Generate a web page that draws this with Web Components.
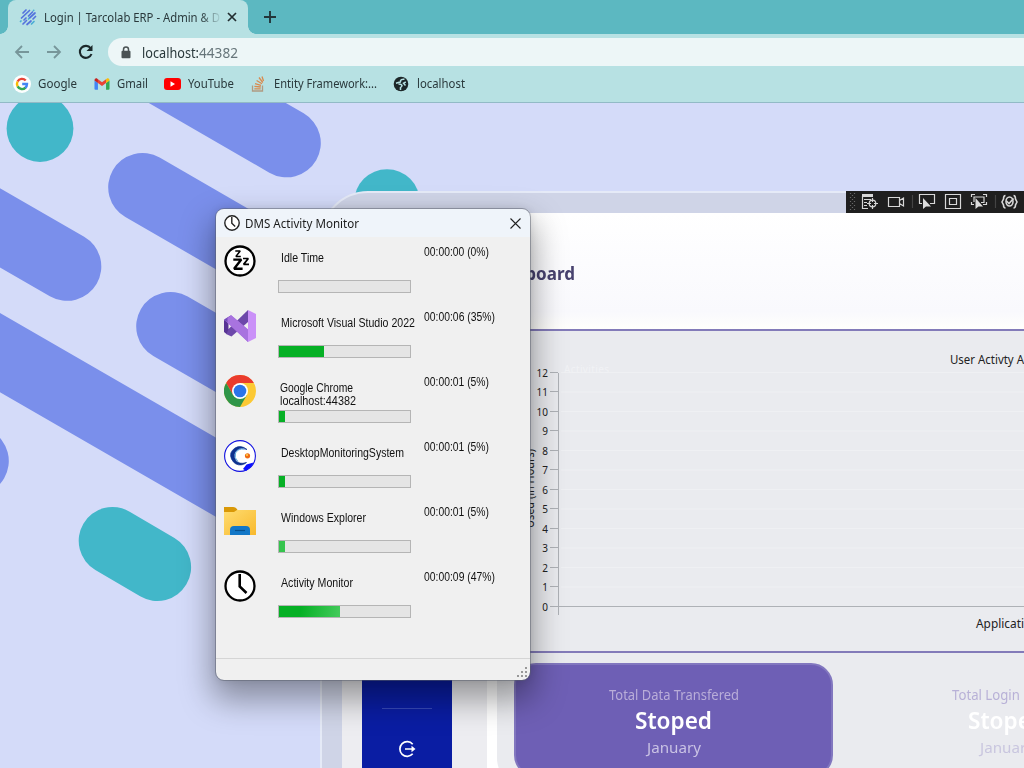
<!DOCTYPE html>
<html lang="en">
<head>
<meta charset="utf-8">
<title>Tarcolab ERP</title>
<style>
body{margin:0;width:1024px;height:768px;overflow:hidden;position:relative;font-family:"Noto Sans","Open Sans",sans-serif}
</style>
</head>
<body>
<browser-chrome></browser-chrome>
<page-view></page-view>
<activity-window></activity-window>
<script>
const define=(name,html,after)=>customElements.define(name,class extends HTMLElement{
  connectedCallback(){
    if(this.shadowRoot)return;
    const root=this.attachShadow({mode:'open'});
    const t=document.createElement('template');
    t.innerHTML=typeof html==='function'?html(this):html;
    root.append(t.content.cloneNode(true));
    if(after)after(this,root);
  }
});

// One line of text, condensed or widened horizontally to the width given in w.
define('fit-text',e=>`<style>:host{display:block;width:${e.getAttribute('w')}px;white-space:nowrap;flex:none}span{display:inline-block;transform-origin:0 50%}</style><span>${e.textContent}</span>`,
(e,r)=>{const s=r.querySelector('span');const n=s.offsetWidth&&s.getBoundingClientRect().width;if(n)s.style.transform=`scaleX(${(+e.getAttribute('w')/n).toFixed(4)})`});

const icons={
tarco:`<svg width="18" height="18" viewBox="0 0 18 18" fill="none" stroke-width="1.700" stroke-linecap="round"><path stroke="#5573dd" d="M4 5L7 2M2.500 10L10.500 2.500M5 12L7 10M9.500 8L13.500 4M4 16L7.500 12.500M10.500 10L16 5M8 16.500L12 13M14 11L16.500 8.500"/><path stroke="#4aaed5" d="M12.500 16L15 13.500M9.500 11L10 10.500M14.500 2.500L14.700 2.300M1.500 13.500L2 13"/></svg>`,
google:`<svg width="18" height="18" viewBox="0 0 18 18"><circle cx="9" cy="9" r="9" fill="#fcfefe"/><g fill="none" stroke-width="2.400"><path stroke="#e94335" d="M4.600 6.500A5 5 0 0 1 12.700 5.500"/><path stroke="#fabb05" d="M4.600 11.400A5 5 0 0 1 4.600 6.500"/><path stroke="#34a853" d="M12.600 12.600A5 5 0 0 1 4.600 11.400"/><path stroke="#4285f4" d="M9.200 9H14A5 5 0 0 1 12.300 12.800"/></g></svg>`,
gmail:`<svg width="16" height="12" viewBox="-.5 0 17 12"><path fill="#4285f4" d="M1 12h2.700V5L0 2.300V11q0 1 1 1z"/><path fill="#34a853" d="M12.300 12H15q1 0 1-1V2.300L12.300 5z"/><path fill="#fbbc04" d="M12.300 1v4L16 2.300V1.800Q15.500-.6 13.600 0z"/><path fill="#ea4335" d="M3.700 5V1L8 4.200 12.300 1v4L8 8.200z"/><path fill="#c5221f" d="M0 1.800v.5L3.700 5V1L2.400 0Q.3-.4 0 1.800z"/></svg>`,
youtube:`<svg width="17" height="12" viewBox="0 0 17 12"><rect width="17" height="12" rx="3" fill="#f00"/><path d="M6.500 3.300v5.400L11 6z" fill="#fff"/></svg>`,
stack:`<svg width="14" height="16" viewBox="0 0 14 16" fill="none" stroke="#d98a4e" stroke-width="1.300"><path d="M1.500 9.500V15H11.500V9.500" stroke="#b09a82"/><path d="M3.300 12.800H9.700M3.400 10.300L9.800 11M4 7.600L10 9.300M5.600 4.500L11 7.800M8 1.500L11.800 6.500M11 .5L12.500 5"/></svg>`,
globe:`<svg width="16" height="16" viewBox="0 0 16 16"><circle cx="8" cy="8" r="7.300" fill="#1c2628"/><path fill="none" stroke="#b7e1e3" stroke-width="1.500" d="M11.500 3.300Q8 3 7.500 4.800Q8 6.500 6 6.300L3 7.200M5.500 8Q8.500 8 9 9.500Q9 10.500 7.500 11.500V14M12.800 6L10.500 7.200 12.500 9.500"/></svg>`,
zzz:`<svg width="32" height="32" viewBox="0 0 32 32" fill="none" stroke="#000" stroke-linejoin="bevel"><circle cx="16" cy="16" r="14.500" fill="#fff" stroke-width="2.300"/><path d="M9.300 14.600H17.300L10.100 23.700H18.600" stroke-width="2.400"/><path d="M11.300 6H16.200L11.900 11.400H16.800" stroke-width="1.500"/><path d="M19 13.500H24.300L19.600 19.400H25" stroke-width="1.700"/></svg>`,
vs:`<svg width="32" height="32" viewBox="0 0 32 32"><path fill="#ca91f8" d="M24 0L32 4V28L24 32z"/><path fill="#6d48aa" d="M24 0V12L7.500 26.500L2 24L3.500 20z"/><path fill="#583494" d="M0 9.500L4.500 13V19.500L2.500 24L0 22z"/><path fill="#a873df" d="M1.500 8.500L7.200 5.200L24 19.500V32L3.500 12.500L0 10z"/><path fill="#744fb8" d="M0 9.800L7.200 5.200L4.500 13z"/><path fill="#a873df" d="M3.500 8L7.200 5.200L24 19.500V32L3.500 13z"/></svg>`,
chrome:`<svg width="32" height="32" viewBox="0 0 32 32"><circle cx="16" cy="16" r="16" fill="#fcc934"/><path fill="#ea3b2e" d="M2.140 8A16 16 0 0 1 29.860 8H16L9 20z"/><path fill="#2f9548" d="M2.140 8L9.070 20Q12 24 22.900 20L16 32A16 16 0 0 1 2.140 8z"/><circle cx="16" cy="16" r="8" fill="#fff"/><circle cx="16" cy="16" r="6.300" fill="#2b74e8"/></svg>`,
dms:`<svg width="32" height="32" viewBox="0 0 32 32"><circle cx="16" cy="16" r="15.400" fill="#fff" stroke="#1010e0" stroke-width="1.100"/><path fill="#0b10ff" d="M19 29L22.500 24.500 29.500 22.500 27 27 22 31z"/><path d="M23 9.500Q17 4.500 11 8Q4.500 12.500 7.500 19Q11 26 18 24.800Q21 24 22.500 22.500Q15 25 11.500 20Q8.500 14 13 10Q17 7 23 9.500z" fill="#0c318f" stroke="#0c318f" stroke-width=".7"/><path d="M20 9Q14 8.500 11.500 13Q9.800 18 14 21.500" fill="none" stroke="#61aee0" stroke-width="1"/><circle cx="23.500" cy="15.800" r="2.600" fill="#f06b16"/><circle cx="23" cy="15" r="1" fill="#ffd84d"/></svg>`,
folder:`<svg width="32" height="32" viewBox="0 0 32 32"><defs><linearGradient id="f" x1="0" y1="0" x2="1" y2="1"><stop stop-color="#ffdc70"/><stop offset="1" stop-color="#f8b92d"/></linearGradient></defs><path fill="#d99807" d="M0 2H9Q12 2 13.500 5H32V9H0z"/><path fill="url(#f)" d="M0 7H10L13 5H32V30H0z"/><path fill="#1277c7" d="M6 30V25Q6 21 10 21H22Q26 21 26 25V30z"/><path d="M11 25.500H21" stroke="#07508e" stroke-width="1.200"/></svg>`,
clock:`<svg width="32" height="32" viewBox="0 0 32 32" fill="none" stroke="#000"><circle cx="16" cy="16" r="14.500" fill="#fff" stroke-width="2.300"/><path d="M15.700 4V16.500L22.500 23" stroke-width="2.600"/></svg>`
};
define('app-icon',e=>`<style>:host{display:block;flex:none}svg{display:block}</style>${icons[e.getAttribute('name')]}`);

define('browser-chrome',`<style>
:host{display:block;height:103px;background:#b7e1e3;color:#29383b;font-size:12.500px;box-sizing:border-box;border-bottom:1px solid #92bac6}
.strip{height:34px;background:#5cb8c1;display:flex;padding-left:8px}
.tab{width:240px;box-sizing:border-box;background:#b7e1e3;border-radius:8px 8px 0 0;display:flex;align-items:center;padding-left:11px;position:relative}
.tab:before,.tab:after{content:"";position:absolute;bottom:0;width:8px;height:8px}
.tab:before{left:-8px;background:radial-gradient(circle at 0 0,#5cb8c1 7.500px,#b7e1e3 8px)}.tab:after{right:-8px;background:radial-gradient(circle at 100% 0,#5cb8c1 7.500px,#b7e1e3 8px)}
.tab app-icon{margin-right:7px}.tab fit-text{margin-right:7px;-webkit-mask:linear-gradient(90deg,#000 156px,transparent 178px)}
.plus{margin:11px 0 0 16px}
.bar{display:flex;height:36px;align-items:center;padding-left:14px}
.bar>svg{flex:none;margin-right:16px}
.url{flex:1;height:28px;border-radius:14px 0 0 14px;background:#edf6f7;display:flex;align-items:center;padding-left:13px;font-size:14px;margin-left:-2px}
.url svg{margin-right:11px}.p{color:#66757a}
.marks{display:flex;align-items:center;height:27px;padding-left:13px}
</style>
<div class="strip"><div class="tab"><app-icon name="tarco"></app-icon><fit-text w="176">Login | Tarcolab ERP - Admin &amp; D</fit-text><svg width="10" height="10" viewBox="0 0 10 10" stroke="#222d30" stroke-width="1.700"><path d="M1 1L9 9M9 1L1 9"/></svg></div>
<svg class="plus" width="12" height="12" stroke="#23363a" stroke-width="1.900"><path d="M6 0V12M0 6H12"/></svg></div>
<div class="bar">
<svg width="16" height="14" fill="none" stroke="#77969a" stroke-width="1.800"><path d="M15 7H2M8 1L2 7L8 13"/></svg>
<svg width="16" height="14" fill="none" stroke="#77969a" stroke-width="1.800"><path d="M1 7H14M8 1L14 7L8 13"/></svg>
<svg width="16" height="16" viewBox="0 0 16 16" fill="none" stroke="#1b282a" stroke-width="2.100"><path d="M12.700 4.300A6 6 0 1 0 13.500 10"/><path fill="#1b282a" stroke="none" d="M14.500 1V7H8.500z"/></svg>
<div class="url"><svg width="10" height="13" viewBox="0 0 10 13"><path d="M2.500 6V3.500Q2.500 1 5 1T7.500 3.500V6" fill="none" stroke="#4a5254" stroke-width="1.500"/><rect x=".5" y="4.700" width="9" height="7.600" rx="1" fill="#4a5254"/></svg><fit-text w="57">localhost:</fit-text><fit-text class="p" w="39">44382</fit-text></div></div>
<div class="marks">
<app-icon name="google"></app-icon><fit-text w="39" style="margin:0 17px 0 7px">Google</fit-text>
<app-icon name="gmail"></app-icon><fit-text w="31" style="margin:0 16px 0 7px">Gmail</fit-text>
<app-icon name="youtube"></app-icon><fit-text w="46" style="margin:0 17px 0 7px">YouTube</fit-text>
<app-icon name="stack"></app-icon><fit-text w="103" style="margin:0 16px 0 9px">Entity Framework:...</fit-text>
<app-icon name="globe"></app-icon><fit-text w="48" style="margin:0 0 0 8px">localhost</fit-text></div>`);

define('back-drop',`<style>:host{position:absolute;inset:0;display:block}svg{display:block}</style>
<svg width="1024" height="665" viewBox="0 103 1024 665"><rect y="103" width="1024" height="665" fill="#d4dbf9"/>
<g stroke="#7a8feb" stroke-width="68.600" stroke-linecap="round"><path d="M286.500 143L79 23M142.500 187.300L420 347.500M67 266.500L-140 147M170.500 326.300L400 459M-120 283.300L360 560.400M-25.500 461L-120 406"/></g>
<g fill="#42b7c9"><circle cx="40" cy="128.500" r="33.400"/><circle cx="387" cy="202" r="32.800"/></g><path d="M112.500 540.800L157.300 567.200" stroke="#42b7c9" stroke-width="67.600" stroke-linecap="round"/></svg>`);

define('line-chart',()=>{let s='';for(let i=0;i<=12;i++){const y=606.500-i*19.500;s+=`<path d="M561 ${y}H1024" stroke="#eff0f3"/><path d="M550 ${Math.round(y)-.5}h8" stroke="#aeb1b6"/><text x="548" y="${y+4}" text-anchor="end">${i}</text>`}
return `<style>:host{display:block}svg{display:block}text{font:10px "Noto Sans",sans-serif;fill:#222}.m{font-size:12px}</style>
<svg width="527" height="320" viewBox="497 331 527 320">${s}<path d="M558.500 373V615M558 606.500H1024" fill="none" stroke="#aeb1b6"/>
<text x="564" y="373" style="fill:#f1f2f5" textLength="45">Activities</text>
<text class="m" x="950" y="364" textLength="74" lengthAdjust="spacingAndGlyphs">User Activty A</text><text class="m" x="976" y="628" textLength="48" lengthAdjust="spacingAndGlyphs">Applicati</text>
<text class="m" transform="translate(534 528) rotate(-90)" textLength="79" lengthAdjust="spacingAndGlyphs">Used (in Hours)</text></svg>`});

define('stat-card',e=>`<style>:host{display:flex;flex-direction:column;align-items:center;width:319px;height:114px;flex:none;box-sizing:border-box;border-radius:22px;padding-top:21px}
:host([active]){background:#6e5fb5;border:2px solid #8277bf;padding-top:19px}
div{white-space:nowrap;line-height:22px;font-size:14px;color:${e.hasAttribute('active')?'#b9add9':'#b8b1d7'}}b{display:block;color:#fff;font:600 23px/28px "Noto Sans"}.m{line-height:27px;color:${e.hasAttribute('active')?'#c9c2e4':'#c9c6df'}}</style>
<div><fit-text w="${e.getAttribute('tw')}">${e.getAttribute('label')}</fit-text></div><b><fit-text w="77">Stoped</fit-text></b><div class="m"><fit-text w="54">January</fit-text></div>`);

define('dev-toolbar',`<style>:host{position:absolute;left:846px;top:88px;width:178px;height:22px;background:#1f1f1f;display:block}svg{display:block}</style>
<svg width="178" height="22" fill="none" stroke="#d8d8d8" stroke-width="1.200"><path d="M4.500 2V20M8.500 2V20" stroke="#686868" stroke-dasharray="1 3"/><path d="M6.500 4V20" stroke="#686868" stroke-dasharray="1 3"/>
<path d="M16 4.500H27" stroke-width="3"/><path d="M16.500 5V17.500H22M18 8.500H25M18 11.500H21M18 14.500H21"/><circle cx="26.500" cy="12.500" r="3.300"/><path d="M26.500 7V11M26.500 14V18M21 12.500H25M28 12.500H32"/>
<path d="M42.500 6.500H53.500V15.500H42.500zM53.500 9.500L57.500 7V15L53.500 12.500"/>
<path d="M66.500 4V17M149.500 4V17" stroke="#444"/>
<path d="M76 12.500H73.500V3.500H88.500V12.500H84"/><path fill="#ddd" stroke="none" d="M77 7V18L80 15.500H85z"/>
<path d="M99.500 3.500H114.500V17.500H99.500zM103.500 7.500H110.500V13.500H103.500z"/>
<path d="M125.500 6V3.500H129M137 3.500H140.500V6M125.500 11V13.500H128M140.500 11V13.500H137M128 11V6H138V11.500H135"/><path fill="#ddd" stroke="none" d="M129.500 7V18L132.500 15.500H137z"/>
<g stroke-width="1.600"><path d="M159.500 4.500Q157.500 4.500 157.500 8L156 11L157.500 14Q157.500 17 159.500 17M167.500 4.500Q169.500 4.500 169.500 8L171 11L169.500 14Q169.500 17 167.500 17"/><ellipse cx="163.500" cy="10.500" rx="3.500" ry="4.500"/><path d="M160.500 10L163 12.500L167.500 7.500"/></g></svg>`);

define('page-view',`<style>
:host{display:block;position:relative;height:665px;overflow:hidden}
.shell{position:relative;margin:88px 0 0 320px;width:800px;height:700px;box-sizing:border-box;border:2px solid #e5eaf7;border-radius:48px 0 0 0;background:#cfd4e7;padding:20px 0 0 20px;display:flex}
.side{width:145px;flex:none;background:#ededf1;box-sizing:border-box;padding-left:20px}
.blue{width:90px;height:100%;background:#0a1da3;display:flex;flex-direction:column;align-items:center;padding-top:495px;box-sizing:border-box}
.blue i{width:50px;height:1px;background:#3648b8;margin-bottom:31px}
.main{flex:1;min-width:0;background:#fff}
header{height:116px;box-sizing:border-box;background:linear-gradient(#fff,#f9f9fd 85%,#fffffc);padding-top:46px;color:#48426f;font:700 17px/30px "Noto Sans"}
header fit-text{margin-left:-4px}
.panel{margin-left:10px;height:457px;background:#eaebef;border-top:2px solid #837bb9;border-bottom-left-radius:30px}
.cards{border-top:2px solid #837bb9;padding:10px 0 0 17px;display:flex;gap:14px}
</style>
<back-drop></back-drop>
<div class="shell"><div class="side"><div class="blue"><i></i><svg width="18" height="18" fill="none" stroke="#fff" stroke-width="1.700"><path d="M14.700 4.200A7.300 7.300 0 1 0 14.700 13.800M7 9H15"/><path d="M13.500 5.800L17.500 9L13.500 12.200z" fill="#fff" stroke="none"/></svg></div></div>
<div class="main"><header><fit-text w="92">Dashboard</fit-text></header><div class="panel"><line-chart></line-chart><div class="cards"><stat-card active label="Total Data Transfered" tw="130"></stat-card><stat-card label="Total Login Hours" tw="109"></stat-card></div></div></div></div>
<dev-toolbar></dev-toolbar>`);

define('activity-row',e=>{const g=n=>e.getAttribute(n);const sub=g('sub');return `<style>
:host{display:grid;grid-template-columns:54px 146px auto;height:65px;color:#111;font:12px/13px "Liberation Sans",sans-serif}
app-icon{margin-top:1px}.c{display:flex;flex-direction:column}.t{height:36px;box-sizing:border-box;padding:8px 0 0 ${sub?2:3}px}
.bar{width:133px;height:13px;box-sizing:border-box;border:1px solid #b5b5b5;background:#e5e5e5}.bar i{display:block;height:100%;background:${g('fill')||'#06b025'}}
.time{padding-top:2px}</style><app-icon name="${g('icon')}"></app-icon><div class="c"><div class="t"><fit-text w="${g('w')}">${g('name')}</fit-text>${sub?`<fit-text w="76">${sub}</fit-text>`:''}</div><div class="bar"><i style="width:${g('bar')}px"></i></div></div><div class="time"><fit-text w="${g('tw')||65}">${g('time')}</fit-text></div>`});

define('activity-window',`<style>
:host{position:absolute;left:216px;top:209px;width:314px;height:471px;border-radius:8px;background:#f0f0f0;display:flex;flex-direction:column;overflow:hidden;outline:1px solid rgba(90,95,110,.5);box-shadow:0 16px 32px 4px rgba(0,0,0,.36),0 0 8px rgba(0,0,0,.1)}
.title{height:28px;background:#eff4fa;display:flex;align-items:center;padding:0 9px 0 8px;color:#1c1c1c;font-size:12px}
.title fit-text{margin-left:5px;margin-right:auto}
.rows{padding:7px 0 0 8px;flex:1}
.status{height:21px;border-top:1px solid #d5d5d5;display:flex;justify-content:flex-end;align-items:flex-end}
</style>
<div class="title"><svg width="16" height="16" viewBox="0 0 16 16" fill="#fff" stroke="#222" stroke-width="1.400"><circle cx="8" cy="8" r="7.200"/><path d="M7.800 2V8.300L11.200 11.500" fill="none"/></svg><fit-text w="114">DMS Activity Monitor</fit-text><svg width="11" height="11" stroke="#222" stroke-width="1.100"><path d="M.5.5L10.500 10.500M10.500.5L.5 10.500"/></svg></div>
<div class="rows">
<activity-row icon="zzz" name="Idle Time" w="43" time="00:00:00 (0%)" bar="0"></activity-row>
<activity-row icon="vs" name="Microsoft Visual Studio 2022" w="134" time="00:00:06 (35%)" tw="71" bar="45"></activity-row>
<activity-row icon="chrome" name="Google Chrome" w="73" sub="localhost:44382" time="00:00:01 (5%)" bar="6"></activity-row>
<activity-row icon="dms" name="DesktopMonitoringSystem" w="123" time="00:00:01 (5%)" bar="6"></activity-row>
<activity-row icon="folder" name="Windows Explorer" w="85" time="00:00:01 (5%)" bar="6" fill="#35c44d"></activity-row>
<activity-row icon="clock" name="Activity Monitor" w="72" time="00:00:09 (47%)" tw="71" bar="61" fill="linear-gradient(100deg,#06b025 35%,#45cb5c)"></activity-row>
</div>
<div class="status"><svg width="14" height="14" fill="#989898"><path d="M9 1h2v2H9zM9 5h2v2H9zM5 5h2v2H5zM9 9h2v2H9zM5 9h2v2H5zM1 9h2v2H1z"/></svg></div>`);
</script>
</body>
</html>
